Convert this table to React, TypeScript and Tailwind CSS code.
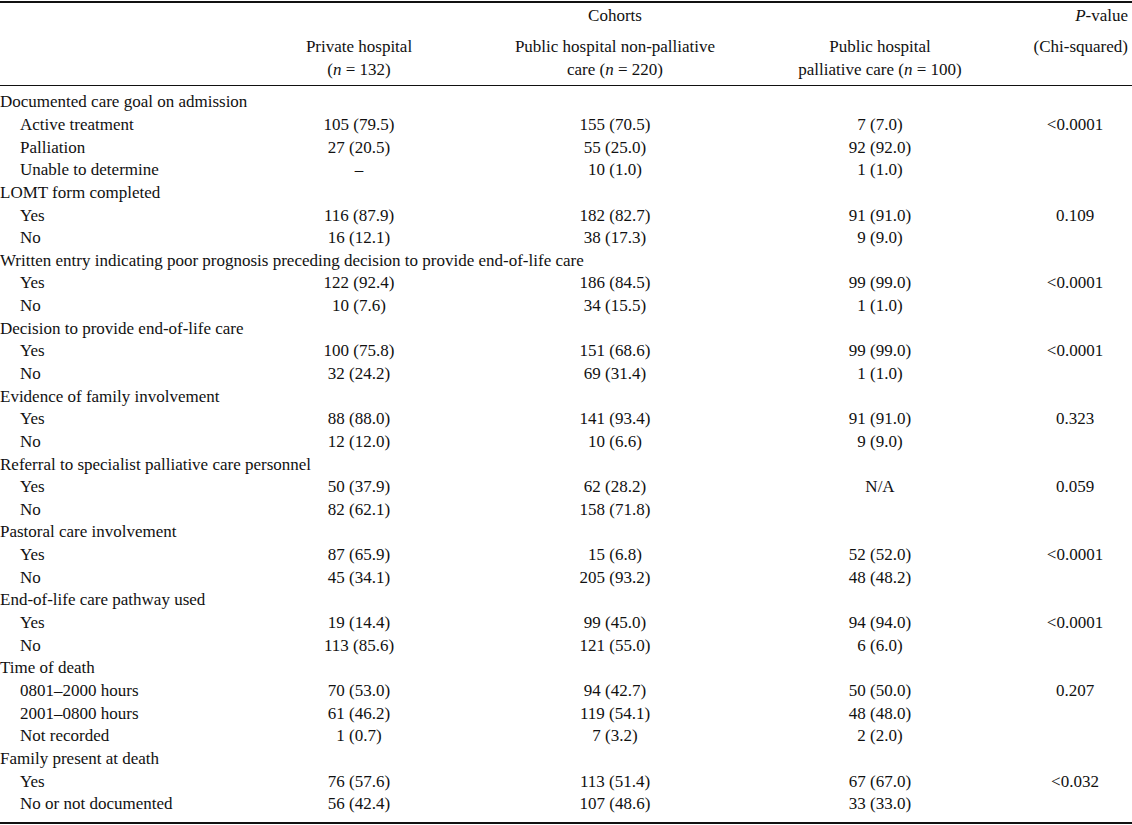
type Row = {
  label: string;
  sub?: boolean;
  a?: string;
  b?: string;
  c?: string;
  p?: string;
};

const rows: Row[] = [
  { label: "Documented care goal on admission" },
  { label: "Active treatment", sub: true, a: "105 (79.5)", b: "155 (70.5)", c: "7 (7.0)", p: "<0.0001" },
  { label: "Palliation", sub: true, a: "27 (20.5)", b: "55 (25.0)", c: "92 (92.0)" },
  { label: "Unable to determine", sub: true, a: "–", b: "10 (1.0)", c: "1 (1.0)" },
  { label: "LOMT form completed" },
  { label: "Yes", sub: true, a: "116 (87.9)", b: "182 (82.7)", c: "91 (91.0)", p: "0.109" },
  { label: "No", sub: true, a: "16 (12.1)", b: "38 (17.3)", c: "9 (9.0)" },
  { label: "Written entry indicating poor prognosis preceding decision to provide end-of-life care" },
  { label: "Yes", sub: true, a: "122 (92.4)", b: "186 (84.5)", c: "99 (99.0)", p: "<0.0001" },
  { label: "No", sub: true, a: "10 (7.6)", b: "34 (15.5)", c: "1 (1.0)" },
  { label: "Decision to provide end-of-life care" },
  { label: "Yes", sub: true, a: "100 (75.8)", b: "151 (68.6)", c: "99 (99.0)", p: "<0.0001" },
  { label: "No", sub: true, a: "32 (24.2)", b: "69 (31.4)", c: "1 (1.0)" },
  { label: "Evidence of family involvement" },
  { label: "Yes", sub: true, a: "88 (88.0)", b: "141 (93.4)", c: "91 (91.0)", p: "0.323" },
  { label: "No", sub: true, a: "12 (12.0)", b: "10 (6.6)", c: "9 (9.0)" },
  { label: "Referral to specialist palliative care personnel" },
  { label: "Yes", sub: true, a: "50 (37.9)", b: "62 (28.2)", c: "N/A", p: "0.059" },
  { label: "No", sub: true, a: "82 (62.1)", b: "158 (71.8)" },
  { label: "Pastoral care involvement" },
  { label: "Yes", sub: true, a: "87 (65.9)", b: "15 (6.8)", c: "52 (52.0)", p: "<0.0001" },
  { label: "No", sub: true, a: "45 (34.1)", b: "205 (93.2)", c: "48 (48.2)" },
  { label: "End-of-life care pathway used" },
  { label: "Yes", sub: true, a: "19 (14.4)", b: "99 (45.0)", c: "94 (94.0)", p: "<0.0001" },
  { label: "No", sub: true, a: "113 (85.6)", b: "121 (55.0)", c: "6 (6.0)" },
  { label: "Time of death" },
  { label: "0801–2000 hours", sub: true, a: "70 (53.0)", b: "94 (42.7)", c: "50 (50.0)", p: "0.207" },
  { label: "2001–0800 hours", sub: true, a: "61 (46.2)", b: "119 (54.1)", c: "48 (48.0)" },
  { label: "Not recorded", sub: true, a: "1 (0.7)", b: "7 (3.2)", c: "2 (2.0)" },
  { label: "Family present at death" },
  { label: "Yes", sub: true, a: "76 (57.6)", b: "113 (51.4)", c: "67 (67.0)", p: "<0.032" },
  { label: "No or not documented", sub: true, a: "56 (42.4)", b: "107 (48.6)", c: "33 (33.0)" },
];

const cols = "grid grid-cols-[244px_230px_282px_248px_128px]";

function DataRow({ row }: { row: Row }) {
  if (!row.sub) {
    return (
      <div className="h-[22.65px] leading-[22.65px] whitespace-nowrap">{row.label}</div>
    );
  }
  return (
    <div className={`${cols} h-[22.65px] leading-[22.65px] whitespace-nowrap`}>
      <div className="pl-[20px]">{row.label}</div>
      <div className="text-center">{row.a}</div>
      <div className="text-center">{row.b}</div>
      <div className="text-center">{row.c}</div>
      <div className="text-center pl-[14px]">{row.p}</div>
    </div>
  );
}

export default function App() {
  return (
    <div className="w-[1132px] h-[825px] bg-white text-[#111] text-[17px] font-['Liberation_Serif',serif] pt-[1px]">
      <div className="border-t-2 border-[#111]" />
      <div className={`${cols} leading-[22.65px] whitespace-nowrap pt-[2px] pb-[4px]`}>
        <div />
        <div className="text-center pt-[31px]">
          <div>Private hospital</div>
          <div>
            (<i>n</i> = 132)
          </div>
        </div>
        <div className="text-center">
          <div className="h-[31px]">Cohorts</div>
          <div>Public hospital non-palliative</div>
          <div>
            care (<i>n</i> = 220)
          </div>
        </div>
        <div className="text-center pt-[31px]">
          <div>Public hospital</div>
          <div>
            palliative care (<i>n</i> = 100)
          </div>
        </div>
        <div className="text-right pr-[4px]">
          <div className="h-[31px]">
            <i>P</i>-value
          </div>
          <div>(Chi-squared)</div>
        </div>
      </div>
      <div className="border-t-[1.5px] border-[#111]" />
      <div className="pt-[5px] pb-[6px]">
        {rows.map((r, i) => (
          <DataRow key={i} row={r} />
        ))}
      </div>
      <div className="border-t-2 border-[#111]" />
    </div>
  );
}
